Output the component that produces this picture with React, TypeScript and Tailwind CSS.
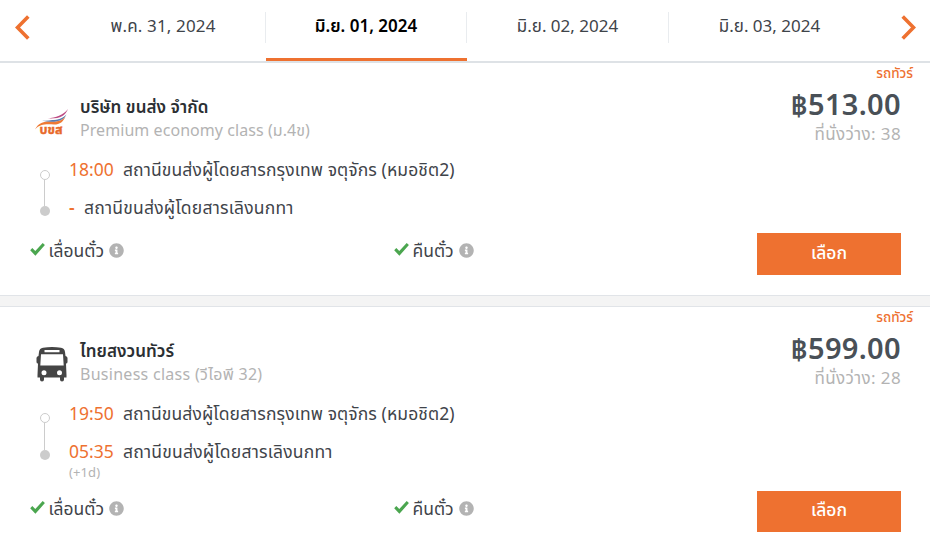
import { FaInfoCircle } from "react-icons/fa";

type Trip = {
  logo: "bks" | "bus";
  name: string;
  service: string;
  serviceClass: string;
  price: string;
  seats: string;
  depart: string;
  arrive: string;
  arriveClass: string;
  nextDay?: string;
};

const trips: Trip[] = [
  {
    logo: "bks",
    name: "บริษัท ขนส่ง จำกัด",
    service: "Premium economy class (ม.4ข)",
    serviceClass: "tracking-[0.06px]",
    price: "฿513.00",
    seats: "ที่นั่งว่าง: 38",
    depart: "18:00",
    arrive: "-",
    arriveClass: "w-[15px] font-semibold",
  },
  {
    logo: "bus",
    name: "ไทยสงวนทัวร์",
    service: "Business class (วีไอพี 32)",
    serviceClass: "tracking-[0.28px]",
    price: "฿599.00",
    seats: "ที่นั่งว่าง: 28",
    depart: "19:50",
    arrive: "05:35",
    arriveClass: "w-[54px]",
    nextDay: "(+1d)",
  },
];

const dates = ["พ.ค. 31, 2024", "มิ.ย. 01, 2024", "มิ.ย. 02, 2024", "มิ.ย. 03, 2024"];

function Chevron({ flip = false }: { flip?: boolean }) {
  return (
    <svg width="15" height="25" viewBox="0 0 15 25" className={flip ? "rotate-180" : ""}>
      <path d="M13.300 1.500 2.500 12.500l10.800 11" fill="none" stroke="#ee7130" strokeWidth="3.600" />
    </svg>
  );
}

function Check() {
  return (
    <svg width="15" height="13" viewBox="0 0 15 13" className="mb-0.5">
      <path d="M0.200 7.200 2.300 5 5.300 7.900 12.700 0 14.900 2.100 5.400 12.800Z" fill="#4ba64f" />
    </svg>
  );
}

function BksLogo() {
  return (
    <svg width="34" height="34" viewBox="0 0 34 34">
      <path d="M0 22.500C4 14.500 10 14.300 18 14.500 24 14.500 28 12.500 30.500 9.500 28.500 14.500 25 17.600 19 17.600 11 17 5 17 0 22.500Z" fill="#ee7a35" />
      <path d="M7 13.800C16 13.500 26 12.500 31.500 7.500 28 14.500 20 16 7 13.800Z" fill="#587cb0" />
      <path d="M10 12.500C19 12 28 11 33 4 30 11.500 23 14 10 12.500Z" fill="#fff" />
      <path d="M12.500 11.300C21 10.600 28 8.500 33 2 30 9.500 24 12 12.500 11.300Z" fill="#bd4b83" />
      <text x="4.500" y="26.500" textLength="23" lengthAdjust="spacingAndGlyphs" fontSize="12" fontWeight="700" fill="#e8692a" stroke="#e8692a" strokeWidth=".4">บขส</text>
    </svg>
  );
}

function BusIcon() {
  return (
    <svg width="32" height="35" viewBox="0 0 32 35">
      <path fillRule="evenodd" fill="#454545" d="M7 .7Q16-.6 25 .7 28.500 1.200 29 5L29.500 9Q31.500 9.500 31.500 11V15Q31.500 16.500 30 16.500L30.500 28V30.500H28V32.500Q28 34.500 26 34.500T24 32.500V30.500H8V32.500Q8 34.500 6 34.500T4 32.500V30.500H1.500V28L2 16.500Q.5 16.500.5 15V11Q.5 9.500 2.500 9L3 5Q3.500 1.200 7 .7ZM8.500 3V5.300H23.500V3ZM5 7.300 4.300 18.500H27.700L27 7.300ZM8 23.300A2.500 2.500 0 1 0 8 28.300 2.500 2.500 0 0 0 8 23.300ZM23.500 23.300A2.500 2.500 0 1 0 23.500 28.300 2.500 2.500 0 0 0 23.500 23.300Z" />
    </svg>
  );
}

function Policy({ label, labelClass }: { label: string; labelClass: string }) {
  return (
    <div className="flex w-[364px] shrink-0 items-center">
      <Check />
      <span className={`ml-[3.500px] shrink-0 text-[17.5px] ${labelClass}`}>{label}</span>
      <FaInfoCircle className="mt-px ml-[5px] size-[15px] text-[#b3b3b3]" />
    </div>
  );
}

function TripCard({ trip }: { trip: Trip }) {
  return (
    <article className="flex h-[232px] justify-between bg-white whitespace-nowrap last:h-[244px]">
      <div className="flex w-[700px] flex-col pt-8 pl-[30px]">
        <div className="flex h-[46px]">
          <div className="w-[50px] pt-2 pl-[6px]">{trip.logo === "bks" ? <div className="-ml-px pt-1"><BksLogo /></div> : <BusIcon />}</div>
          <div>
            <h2 className="h-6 w-fit text-[17px] leading-6 font-semibold tracking-[0.05px] text-[#2b2f33]">{trip.name}</h2>
            <p className={`h-[22px] w-fit text-base leading-[22px] text-[#b3b3b3] ${trip.serviceClass}`}>{trip.service}</p>
          </div>
        </div>
        <div className="mt-[17px] flex h-[62px]">
          <div className={`flex w-[39px] flex-col items-center pr-[9px] ${trip.nextDay ? "pt-[11px]" : "pt-3"}`}>
            <span className="size-[10px] shrink-0 rounded-full border border-[#ccc]" />
            <span className={`mr-px w-px shrink-0 bg-[#ccc] ${trip.nextDay ? "h-[27px]" : "h-[26px]"}`} />
            <span className="size-[10px] shrink-0 rounded-full bg-[#ccc]" />
          </div>
          <div className="-mt-px flex flex-col gap-[14px] text-[17.5px] leading-6">
            <div className="flex h-6">
              <span className="w-[54px] text-[#ee7130]">{trip.depart}</span>
              <span className="tracking-[0.1px]">สถานีขนส่งผู้โดยสารกรุงเทพ จตุจักร (หมอชิต2)</span>
            </div>
            <div className="flex h-6">
              <span className={`text-[#ee7130] ${trip.arriveClass}`}>{trip.arrive}</span>
              <span className="tracking-[0.22px]">สถานีขนส่งผู้โดยสารเลิงนกทา</span>
            </div>
          </div>
        </div>
        {trip.nextDay && <p className="-mt-px h-[18px] pl-[39px] text-[13px] leading-[18px] tracking-[0.1px] text-[#b3b3b3]">{trip.nextDay}</p>}
        <div className={`flex h-6 items-center ${trip.nextDay ? "mt-[15px]" : "mt-[18px]"}`}>
          <Policy label="เลื่อนตั๋ว" labelClass="w-[55.500px]" />
          <Policy label="คืนตั๋ว" labelClass="w-[41.500px]" />
        </div>
      </div>
      <div className="flex w-[230px] flex-col items-end pr-[29px]">
        <span className="-mr-3 h-5 text-[13.5px] leading-5 font-medium text-[#ee7130]">รถทัวร์</span>
        <strong className="h-[41px] text-[29px] leading-[41px] font-semibold tracking-[0.35px] text-[#495057]">{trip.price}</strong>
        <span className="h-[19px] text-[17px] leading-[19px] tracking-[0.38px] text-[#b3b3b3]">{trip.seats}</span>
        <button className={`w-36 bg-[#ee7130] pb-1 text-[17.5px] font-medium text-white ${trip.nextDay ? "mt-[104px] h-[41px]" : "mt-[90px] h-[42px]"}`}>เลือก</button>
      </div>
    </article>
  );
}

export default function App() {
  return (
    <main className="h-[551px] w-[930px] overflow-hidden bg-white font-['Noto_Sans','Noto_Sans_Thai',sans-serif] text-[#3f444a]">
      <nav className="flex h-[63px] border-b-2 border-[#dee2e6]">
        <button className="flex w-16 pt-[15px] pl-[15px]"><Chevron /></button>
        {dates.map((date, i) => (
          <div key={date} className={`flex h-[61px] items-start pt-3 ${i === 0 || i === 2 ? "w-[202px]" : "w-[201px]"} ${i === 1 ? "border-b-[3px] border-[#ee7130]" : ""}`}>
            <div className={`flex h-[31px] flex-1 items-start justify-center text-[17px] leading-7 whitespace-nowrap ${i === 0 ? "pr-[3px] tracking-[0.15px]" : ""}`}>
              <span className={i === 1 ? "font-semibold text-black" : ""}>{date}</span>
            </div>
            {i < 3 && <span className="h-[31px] w-px bg-[#e9ecef]" />}
          </div>
        ))}
        <button className="flex flex-1 justify-end pt-[15px] pr-[14px]"><Chevron flip /></button>
      </nav>
      <TripCard trip={trips[0]} />
      <div className="h-3 border-y border-[#e1e4e8] bg-[#f4f4f4]" />
      <TripCard trip={trips[1]} />
    </main>
  );
}
